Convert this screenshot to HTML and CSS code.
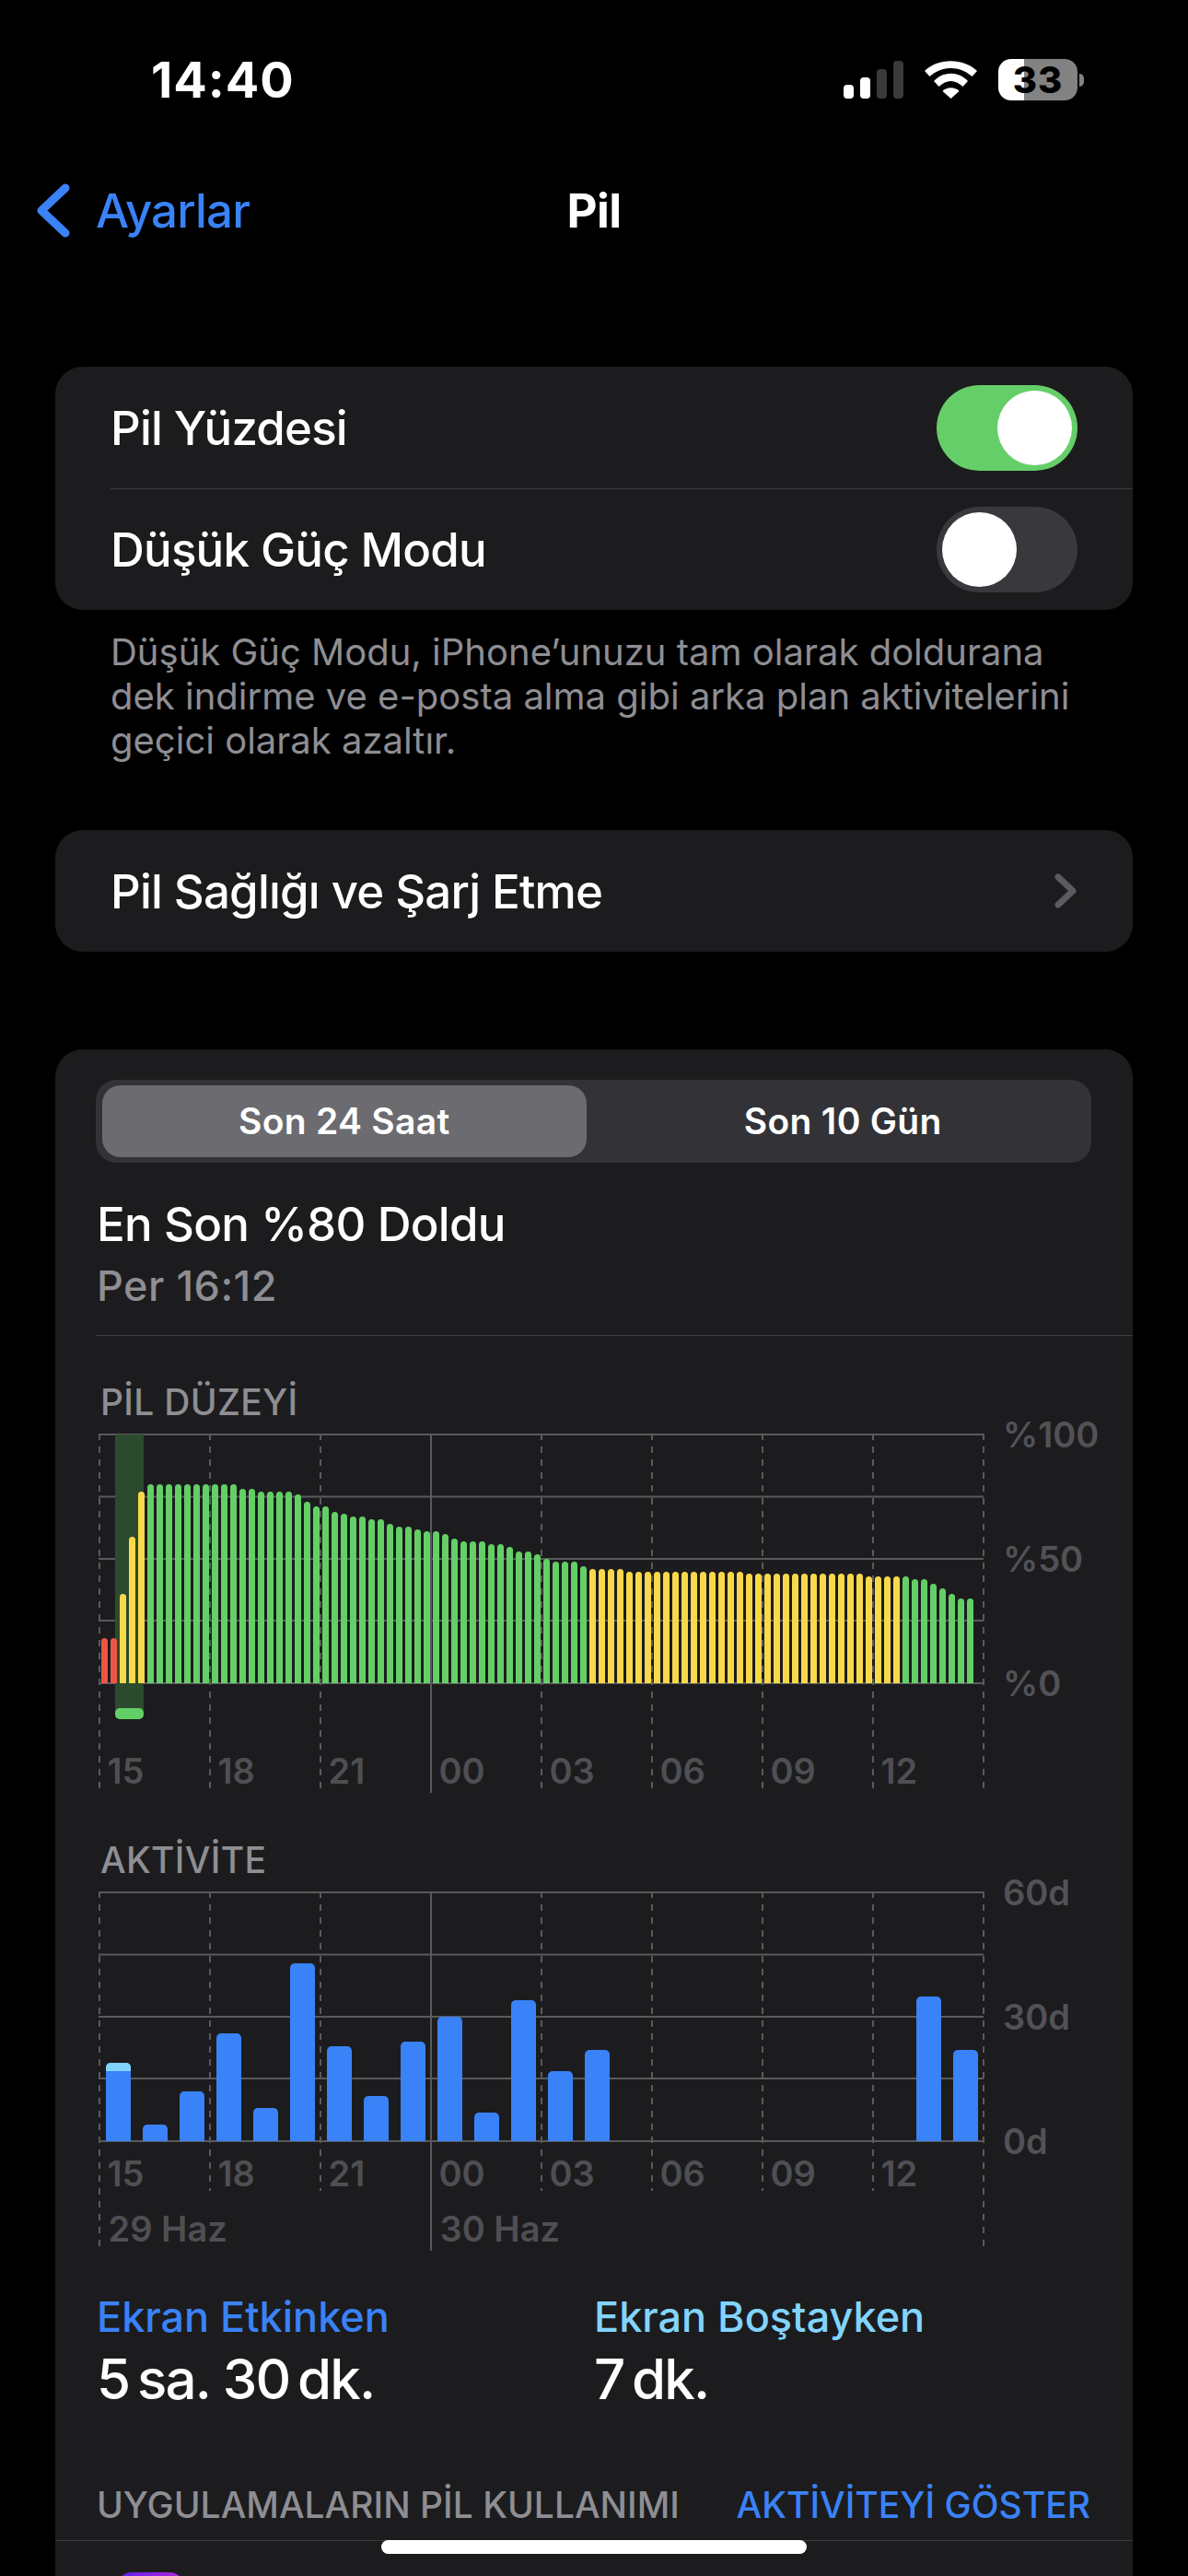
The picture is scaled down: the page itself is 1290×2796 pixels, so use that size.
FILE: index.html
```html
<!DOCTYPE html>
<html lang="tr">
<head>
  <meta charset="UTF-8" />
  <meta name="viewport" content="width=device-width, initial-scale=1.0"/>
  <title>Pil</title>
  <link rel="stylesheet" href="styles.css">
</head>
<body>
  <header class="status">
    <span class="time">14:40</span>
    <div class="status-icons">
      <div class="signal">
        <i class="s1"></i><i class="s2"></i><i class="s3 off"></i><i class="s4 off"></i>
      </div>
      <svg class="wifi" viewBox="0 0 57 41">
        <path d="M0 11C15-3.5 42-3.5 57 11L51.5 17C38 5 19 5 5.5 17Z"/>
        <path d="M10 22C20 11 37 11 47 22L41.5 28C33 20 24 20 15.5 28Z"/>
        <path d="M19.5 33C24 28 33 28 37.5 33L28.5 41Z"/>
      </svg>
      <div class="battery">
        <div class="battery-body">33</div>
        <div class="battery-nub"></div>
      </div>
    </div>
  </header>

  <nav class="nav">
    <a class="back">
      <svg viewBox="0 0 36 59"><path d="M31 5L5 29.5L31 54"/></svg>
      <span>Ayarlar</span>
    </a>
    <h1>Pil</h1>
  </nav>

  <main class="content">
    <section class="card">
      <div class="row">
        <span>Pil Yüzdesi</span>
        <span class="toggle on"><i></i></span>
      </div>
      <div class="row row-line">
        <span>Düşük Güç Modu</span>
        <span class="toggle"><i></i></span>
      </div>
    </section>
    <p class="footnote">Düşük Güç Modu, iPhone’unuzu tam olarak doldurana<br>dek indirme ve e-posta alma gibi arka plan aktivitelerini<br>geçici olarak azaltır.</p>

    <section class="card">
      <div class="row">
        <span>Pil Sağlığı ve Şarj Etme</span>
        <svg class="chevron" viewBox="0 0 26 40"><path d="M5 5L21 20L5 35"/></svg>
      </div>
    </section>

    <section class="card usage">
      <div class="segment">
        <span class="selected">Son 24 Saat</span>
        <span>Son 10 Gün</span>
      </div>

      <h2 class="last-title">En Son %80 Doldu</h2>
      <p class="last-time">Per 16:12</p>
      <div class="line"></div>

      <h3 class="chart-title">PİL DÜZEYİ</h3>
      <div class="chart chart-level">
        <svg class="grid-lines" viewBox="0 0 962 390">
          <path class="h" d="M0 1H961M0 68.5H961M0 136H961M0 203H961M0 271H961"/>
          <path class="v" d="M1 0V385M121 0V385M241 0V385M481 0V385M601 0V385M721 0V385M841 0V385M961 0V385"/>
          <path class="h" d="M361 0V391"/>
        </svg>
        <div class="charge"></div>
        <div class="plot level-bars">
          <i class="r" style="height:18%"></i><i class="r" style="height:18%"></i>
          <i class="y" style="height:36%"></i><i class="y" style="height:59%"></i><i class="y" style="height:77%"></i>
          <i style="height:80%"></i><i style="height:80%"></i><i style="height:80%"></i><i style="height:80%"></i><i style="height:80%"></i>
          <i style="height:80%"></i><i style="height:80%"></i><i style="height:80%"></i><i style="height:80%"></i><i style="height:80%"></i>
          <i style="height:78%"></i><i style="height:78%"></i><i style="height:77%"></i><i style="height:77%"></i><i style="height:77%"></i>
          <i style="height:77%"></i><i style="height:76%"></i><i style="height:73%"></i><i style="height:71%"></i><i style="height:71%"></i>
          <i style="height:69%"></i><i style="height:68%"></i><i style="height:67%"></i><i style="height:67%"></i><i style="height:66%"></i>
          <i style="height:66%"></i><i style="height:64%"></i><i style="height:63%"></i><i style="height:63%"></i><i style="height:62%"></i>
          <i style="height:61%"></i><i style="height:61%"></i><i style="height:60%"></i><i style="height:58%"></i><i style="height:57%"></i>
          <i style="height:57%"></i><i style="height:57%"></i><i style="height:56%"></i><i style="height:56%"></i><i style="height:55%"></i>
          <i style="height:53%"></i><i style="height:53%"></i><i style="height:52%"></i><i style="height:50%"></i><i style="height:49%"></i>
          <i style="height:49%"></i><i style="height:49%"></i><i style="height:47%"></i>
          <i class="y" style="height:46%"></i><i class="y" style="height:46%"></i><i class="y" style="height:46%"></i><i class="y" style="height:46%"></i>
          <i class="y" style="height:45%"></i><i class="y" style="height:45%"></i><i class="y" style="height:45%"></i><i class="y" style="height:45%"></i>
          <i class="y" style="height:45%"></i><i class="y" style="height:45%"></i><i class="y" style="height:45%"></i><i class="y" style="height:45%"></i>
          <i class="y" style="height:45%"></i><i class="y" style="height:45%"></i><i class="y" style="height:45%"></i><i class="y" style="height:45%"></i>
          <i class="y" style="height:45%"></i>
          <i class="y" style="height:44%"></i><i class="y" style="height:44%"></i><i class="y" style="height:44%"></i><i class="y" style="height:44%"></i>
          <i class="y" style="height:44%"></i><i class="y" style="height:44%"></i><i class="y" style="height:44%"></i><i class="y" style="height:44%"></i>
          <i class="y" style="height:44%"></i><i class="y" style="height:44%"></i><i class="y" style="height:44%"></i><i class="y" style="height:44%"></i>
          <i class="y" style="height:44%"></i>
          <i class="y" style="height:43%"></i><i class="y" style="height:43%"></i><i class="y" style="height:43%"></i><i class="y" style="height:43%"></i>
          <i style="height:43%"></i><i style="height:42%"></i><i style="height:42%"></i><i style="height:40%"></i>
          <i style="height:38%"></i><i style="height:36%"></i><i style="height:34%"></i><i style="height:34%"></i>
        </div>
        <div class="y-axis"><span>%100</span><span>%50</span><span>%0</span></div>
        <div class="x-axis">
          <span>15</span><span>18</span><span>21</span><span>00</span><span>03</span><span>06</span><span>09</span><span>12</span>
        </div>
      </div>

      <h3 class="chart-title">AKTİVİTE</h3>
      <div class="chart chart-activity">
        <svg class="grid-lines" viewBox="0 0 962 390">
          <path class="h" d="M0 1H961M0 68.5H961M0 136H961M0 203H961M0 271H961"/>
          <path class="v" d="M121 0V325M241 0V325M481 0V325M601 0V325M721 0V325M841 0V325M1 0V385M961 0V385"/>
          <path class="h" d="M361 0V390"/>
        </svg>
        <div class="plot activity-bars">
          <i style="height:31.4%"><b></b></i>
          <i style="height:6.6%"></i>
          <i style="height:19.9%"></i>
          <i style="height:43.2%"></i>
          <i style="height:13.2%"></i>
          <i style="height:71.4%"></i>
          <i style="height:38%"></i>
          <i style="height:18%"></i>
          <i style="height:39.9%"></i>
          <i style="height:49.9%"></i>
          <i style="height:11.4%"></i>
          <i style="height:56.6%"></i>
          <i style="height:28%"></i>
          <i style="height:36.6%"></i>
          <i class="gap-8"></i>
          <i style="height:58%"></i>
          <i style="height:36.6%"></i>
        </div>
        <div class="y-axis"><span>60d</span><span>30d</span><span>0d</span></div>
        <div class="x-axis">
          <span>15</span><span>18</span><span>21</span><span>00</span><span>03</span><span>06</span><span>09</span><span>12</span>
        </div>
        <div class="dates">
          <span>29 Haz</span><span>30 Haz</span>
        </div>
      </div>

      <div class="stats">
        <div>
          <p class="stat-label active">Ekran Etkinken</p>
          <p class="stat-value">5&#8201;sa. 30&#8201;dk.</p>
        </div>
        <div>
          <p class="stat-label idle">Ekran Boştayken</p>
          <p class="stat-value">7&#8201;dk.</p>
        </div>
      </div>

      <div class="apps-head">
        <span>UYGULAMALARIN PİL KULLANIMI</span>
        <a>AKTİVİTEYİ GÖSTER</a>
      </div>
      <div class="line apps-line"></div>
      <div class="app-icon"></div>
    </section>
  </main>

  <div class="home-bar"></div>
</body>
</html>
```
FILE: styles.css
```css
* {
  box-sizing: border-box;
}
html, body {
  height: 2796px;
  overflow: hidden;
}
body {
  margin: 0;
  background: #000;
  color: #fff;
  font-family: "Inter", "Liberation Sans", sans-serif;
  position: relative;
}
p, h1, h2, h3 {
  margin: 0;
  font-weight: 400;
}

/* status bar */
.status {
  display: flex;
  justify-content: space-between;
  align-items: center;
  height: 54px;
  margin-top: 60px;
  padding: 0 113px 0 164px;
}
.time {
  font-size: 54px;
  line-height: 54px;
  font-weight: 700;
  letter-spacing: 1px;
}
.status-icons {
  display: flex;
  align-items: center;
  gap: 23px;
  margin-top: -1px;
}
.signal {
  display: flex;
  align-items: flex-end;
  gap: 7px;
  height: 41px;
}
.signal i {
  width: 11px;
  border-radius: 4px;
  background: #fff;
}
.signal i.off {
  background: #3a3a3a;
}
.s1 { height: 15px; }
.s2 { height: 23px; }
.s3 { height: 32px; }
.s4 { height: 41px; }
.wifi {
  width: 57px;
  height: 41px;
  fill: #fff;
}
.battery {
  display: flex;
  align-items: center;
  gap: 2px;
}
.battery-body {
  width: 86px;
  height: 45px;
  border-radius: 14px;
  background: linear-gradient(90deg, #fff 28px, #828282 28px);
  color: #000;
  font-size: 40px;
  font-weight: 800;
  line-height: 45px;
  letter-spacing: 1px;
  text-align: center;
}
.battery-nub {
  width: 5px;
  height: 14px;
  border-radius: 0 7px 7px 0;
  background: #828282;
}

/* navigation */
.nav {
  display: grid;
  grid-template-columns: 1fr auto 1fr;
  align-items: center;
  height: 60px;
  margin-top: 84px;
  padding-left: 40px;
  padding-right: 40px;
}
.back {
  display: flex;
  align-items: center;
  gap: 28px;
  color: #3a82f7;
  font-size: 51px;
  font-weight: 500;
  letter-spacing: -0.8px;
}
.back svg {
  width: 36px;
  height: 59px;
  fill: none;
  stroke: #3a82f7;
  stroke-width: 9;
  stroke-linecap: round;
  stroke-linejoin: round;
}
.nav h1 {
  font-size: 51px;
  font-weight: 700;
  letter-spacing: -0.5px;
}

/* cards */
.content {
  padding: 0 60px;
  margin-top: 140px;
}
.card {
  background: #1c1c1e;
  border-radius: 30px;
}
.row {
  display: flex;
  justify-content: space-between;
  align-items: center;
  height: 132px;
  margin-left: 60px;
  padding-right: 60px;
  font-size: 51px;
  font-weight: 500;
  letter-spacing: -0.8px;
}
.row-line {
  border-top: 1px solid #3a3a3c;
}
.toggle {
  display: flex;
  align-items: center;
  width: 153px;
  height: 93px;
  padding: 0 6px;
  border-radius: 47px;
  background: #39393d;
}
.toggle.on {
  justify-content: flex-end;
  background: #65ce68;
}
.toggle i {
  width: 81px;
  height: 81px;
  border-radius: 50%;
  background: #fff;
}
.chevron {
  width: 26px;
  height: 40px;
  fill: none;
  stroke: #5b5b60;
  stroke-width: 7;
  stroke-linecap: round;
  stroke-linejoin: round;
}
.footnote {
  margin: 22px 0 73px 60px;
  color: #8e8e93;
  font-size: 40px;
  line-height: 48px;
}

/* usage card */
.usage {
  margin-top: 106px;
  padding: 33px 45px 0 44px;
  height: 1700px;
  border-radius: 30px 30px 0 0;
}
.segment {
  display: grid;
  grid-template-columns: 1fr 1fr;
  gap: 16px;
  height: 90px;
  padding: 6px 7px;
  border-radius: 22px;
  background: #323237;
  font-size: 39px;
  font-weight: 600;
  letter-spacing: 0.3px;
  text-align: center;
}
.segment span {
  line-height: 78px;
}
.segment .selected {
  border-radius: 20px;
  background: #6b6b70;
}
.last-title {
  margin: 37px 0 0 1px;
  font-size: 51px;
  font-weight: 500;
  line-height: 60px;
  letter-spacing: -0.7px;
}
.last-time {
  margin: 10px 0 26px 1px;
  color: #8e8e93;
  font-size: 45px;
  font-weight: 500;
  line-height: 54px;
  letter-spacing: 0.5px;
}
.line {
  height: 1px;
  margin-right: -45px;
  background: #3a3a3c;
}
.chart-title {
  margin: 50px 0 13px 5px;
  color: #8e8e93;
  font-size: 39px;
  font-weight: 500;
  line-height: 44px;
  letter-spacing: 0.3px;
}

/* charts */
.chart {
  position: relative;
  display: grid;
  grid-template-columns: 960px 1fr;
  column-gap: 21px;
  align-content: start;
  margin-left: 4px;
}
.chart-level {
  height: 390px;
}
.chart-activity {
  height: 389px;
}
.grid-lines {
  position: absolute;
  left: -1px;
  top: -1px;
  width: 962px;
  height: 390px;
  fill: none;
  stroke-width: 2;
}
.grid-lines .h {
  stroke: #5a5a5d;
}
.grid-lines .v {
  stroke: #5a5a5d;
  stroke-dasharray: 7 7;
}
.charge {
  position: absolute;
  left: 17px;
  top: 0;
  width: 31px;
  height: 300px;
  background: #2b4a2e;
}
.charge::after {
  content: "";
  position: absolute;
  left: 0;
  bottom: -9px;
  width: 31px;
  height: 12px;
  border-radius: 5px;
  background: #64cf66;
}
.plot {
  position: relative;
  display: flex;
  align-items: flex-end;
  height: 270px;
}
.plot i {
  display: block;
}
.level-bars {
  gap: 2.5px;
  padding-left: 1.5px;
}
.level-bars i {
  width: 7.5px;
  border-radius: 4px 4px 0 0;
  background: #64cf66;
}
.level-bars i.y {
  background: #f9d84a;
}
.level-bars i.r {
  background: #ec5545;
}
.activity-bars {
  gap: 13.5px;
  padding-left: 7px;
}
.activity-bars i {
  width: 26.5px;
  border-radius: 5px 5px 0 0;
  background: #3a82f7;
  overflow: hidden;
}
.activity-bars b {
  display: block;
  height: 9px;
  background: #82d4fd;
}
.activity-bars .gap-8 {
  width: 306.5px;
  background: none;
}
.y-axis {
  position: relative;
  display: flex;
  flex-direction: column;
  justify-content: space-between;
  height: 270px;
  color: #525256;
  font-size: 38px;
  font-weight: 600;
  line-height: 0;
}
.y-axis span {
  display: block;
  height: 0;
}
.x-axis {
  position: relative;
  display: grid;
  grid-template-columns: repeat(8, 120px);
  grid-column: 1;
  padding-left: 8.5px;
  color: #4f4f53;
  font-size: 38px;
  font-weight: 600;
  line-height: 44px;
}
.chart-level .x-axis {
  margin-top: 73px;
}
.chart-activity .x-axis {
  margin-top: 13px;
}
.dates {
  position: relative;
  display: grid;
  grid-template-columns: 360px 1fr;
  grid-column: 1;
  margin-top: 16px;
  padding-left: 9.5px;
  color: #4f4f53;
  font-size: 38px;
  font-weight: 600;
  line-height: 44px;
}

/* totals */
.stats {
  display: grid;
  grid-template-columns: 540px 1fr;
  margin: 45px 0 0 1px;
}
.stat-label {
  font-size: 45px;
  font-weight: 500;
  line-height: 54px;
}
.stat-label.active {
  color: #3a82f7;
}
.stat-label.idle {
  color: #82d4fd;
}
.stat-value {
  margin-top: 4px;
  font-size: 60px;
  font-weight: 500;
  line-height: 72px;
  letter-spacing: -1.8px;
}
.apps-head {
  display: flex;
  justify-content: space-between;
  margin: 79px 1px 16px 1px;
  color: #8e8e93;
  font-size: 39px;
  font-weight: 500;
  line-height: 44px;
}
.apps-head a {
  color: #3a82f7;
}
.apps-line {
  margin-left: -44px;
}
.app-icon {
  width: 73px;
  height: 73px;
  margin: 34px 0 0 23px;
  border-radius: 16px;
  background: linear-gradient(90deg, #5a1ff0, #b226d8);
}

.home-bar {
  position: absolute;
  left: 414px;
  top: 2757px;
  width: 462px;
  height: 15px;
  border-radius: 8px;
  background: #fff;
}
```
